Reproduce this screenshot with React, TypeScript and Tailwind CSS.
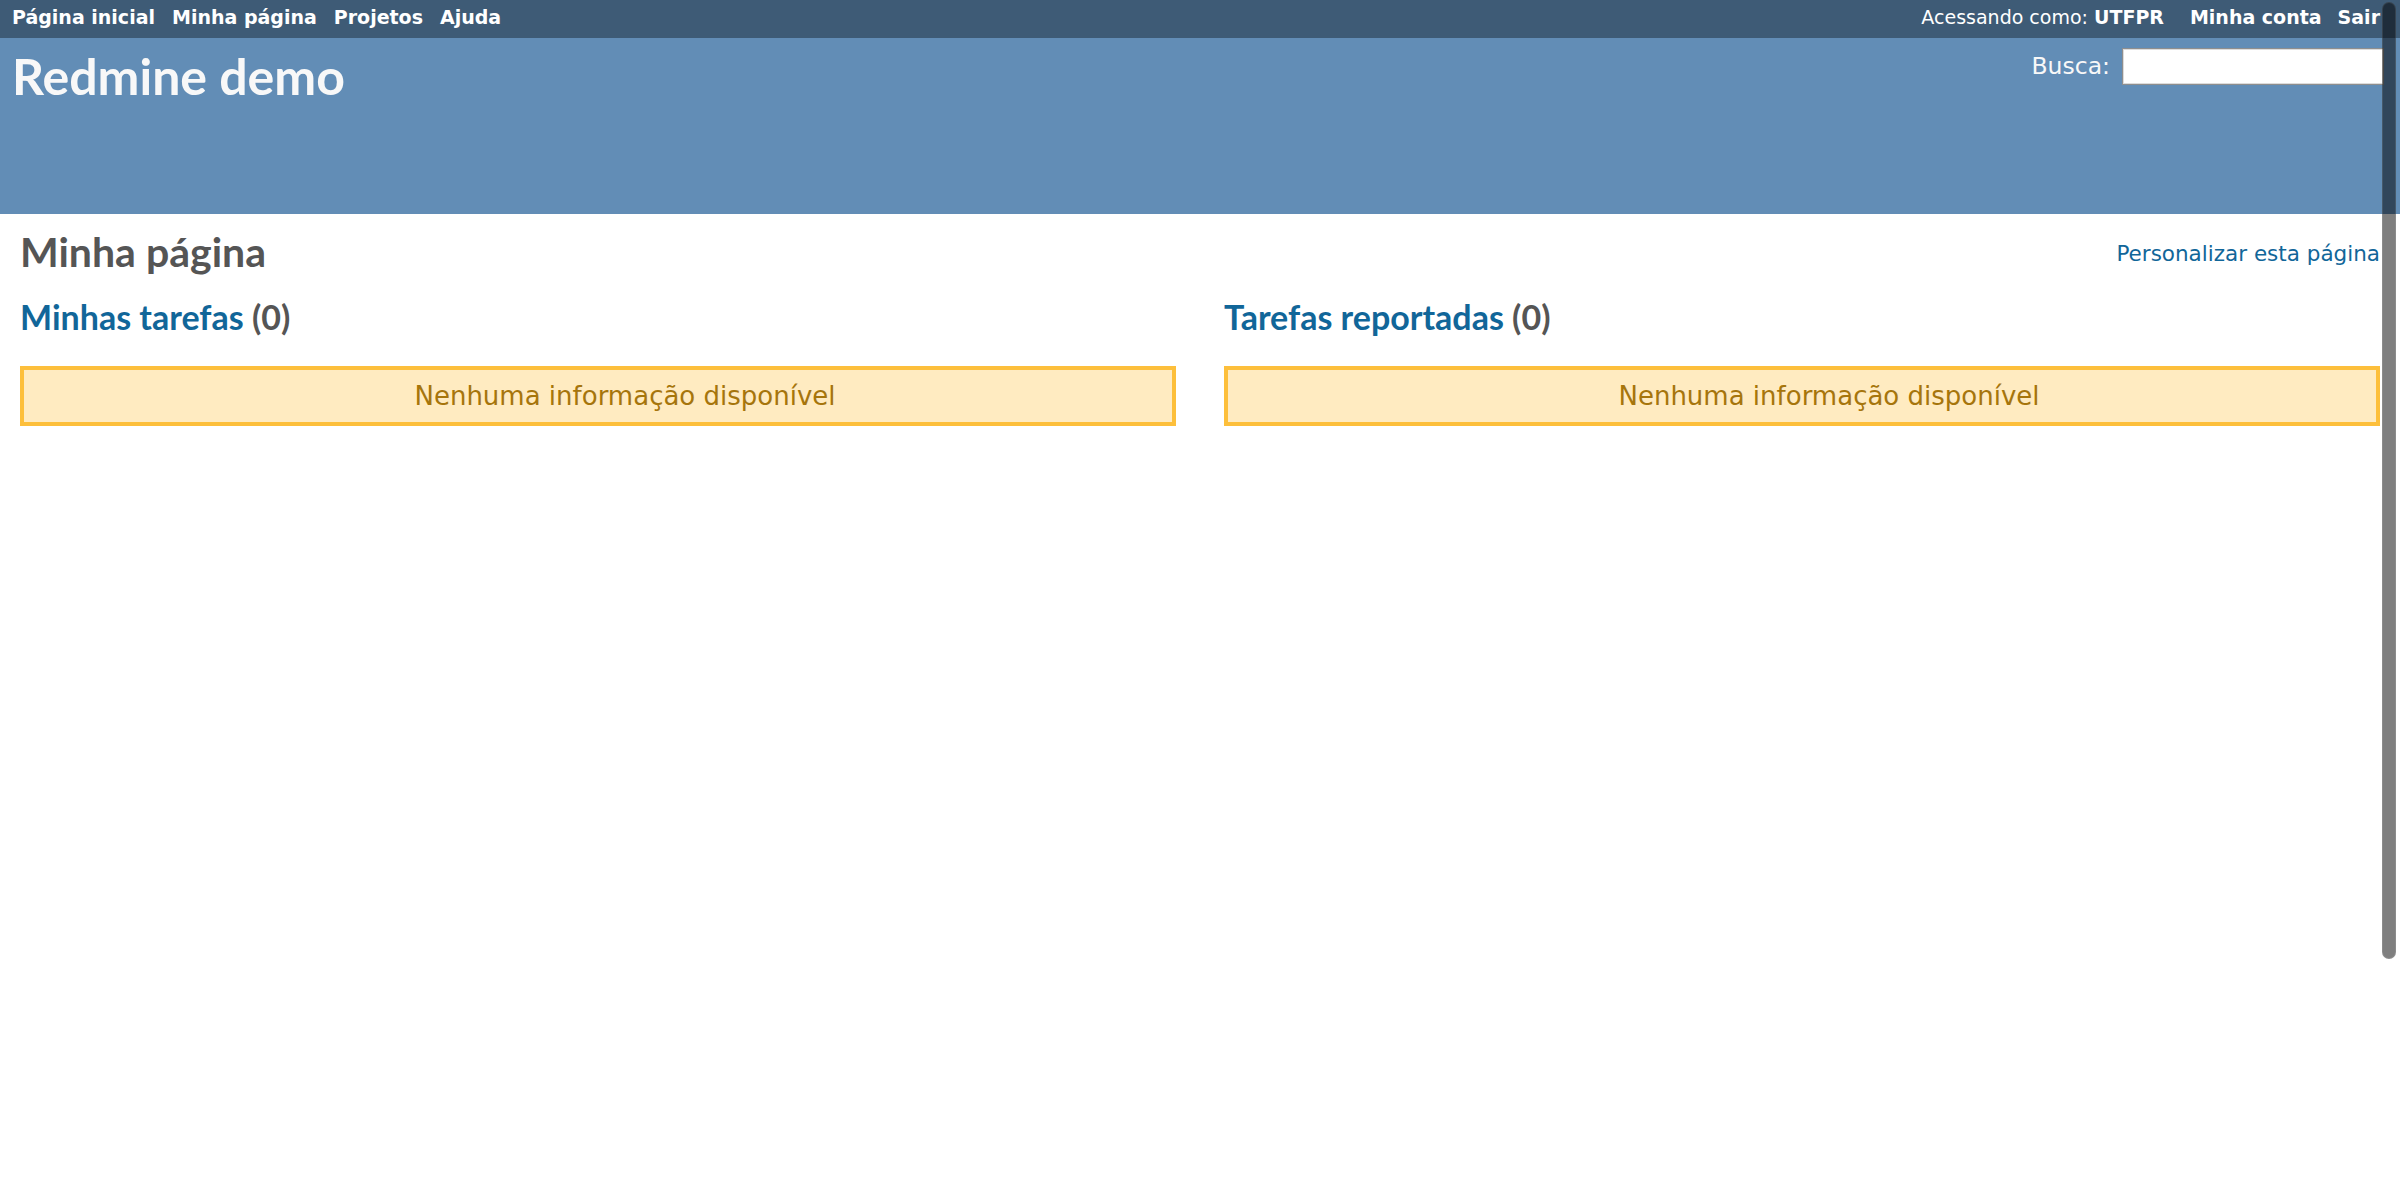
import React from "react";

function TopMenu() {
  return (
    <div className="h-[38px] bg-[#3e5b76] flex justify-between items-start pt-[6px] pl-[12px] pr-[20px] text-white text-[19px] leading-[22px]">
      <div className="flex gap-[17px] font-bold">
        <a>Página inicial</a>
        <a>Minha página</a>
        <a>Projetos</a>
        <a>Ajuda</a>
      </div>
      <div className="flex items-start">
        <div>
          Acessando como: <span className="font-bold">UTFPR</span>
        </div>
        <div className="flex gap-[16px] font-bold ml-[26px]">
          <a>Minha conta</a>
          <a>Sair</a>
        </div>
      </div>
    </div>
  );
}

function Header() {
  return (
    <div className="h-[176px] bg-[#628db6] flex justify-between items-start pt-[10px] pl-[12px] pr-[16px]">
      <h1 className="mt-[2.6px] font-['Lato',sans-serif] font-bold text-[50px] leading-[50px] text-[#f8f8f8]">
        Redmine demo
      </h1>
      <div className="flex items-start gap-[12px]">
        <label className="mt-[4px] text-[23.5px] leading-[28px] text-[#f8f8f8]">Busca:</label>
        <input
          type="text"
          className="w-[262px] h-[37px] bg-white border border-[#8e8e8e] shadow-[inset_0_0_0_1px_#dcdcdc] outline-none"
        />
      </div>
    </div>
  );
}

function Block({ title }: { title: string }) {
  return (
    <div className="flex flex-col">
      <h3 className="mt-[28.5px] font-['Lato',sans-serif] font-bold text-[34px] leading-[34px] text-[#555555]">
        <a className="text-[#116699]">{title}</a> (0)
      </h3>
      <p className="mt-[31.8px] border-4 border-[#fdbf3b] bg-[#ffebc1] text-[#a6750c] text-[26px] leading-[30px] pt-[11px] pb-[11px] pl-[62px] pr-[8px] text-center">
        Nenhuma informação disponível
      </p>
    </div>
  );
}

export default function App() {
  return (
    <div className="relative w-full min-h-[1200px] bg-white font-['DejaVu_Sans',sans-serif]">
      <TopMenu />
      <Header />
      <div className="px-[20px]">
        <div className="flex justify-between items-start">
          <h2 className="mt-[16.6px] font-['Lato',sans-serif] font-bold text-[41px] leading-[41px] text-[#555555]">
            Minha página
          </h2>
          <a className="mt-[26.5px] text-[21.5px] leading-[26px] text-[#116699]">Personalizar esta página</a>
        </div>
        <div className="grid grid-cols-2 gap-[48px]">
          <Block title="Minhas tarefas" />
          <Block title="Tarefas reportadas" />
        </div>
      </div>
      <div className="absolute right-[4px] top-[2px] w-[14px] h-[957px] rounded-full bg-black/50 border border-white/10" />
    </div>
  );
}
